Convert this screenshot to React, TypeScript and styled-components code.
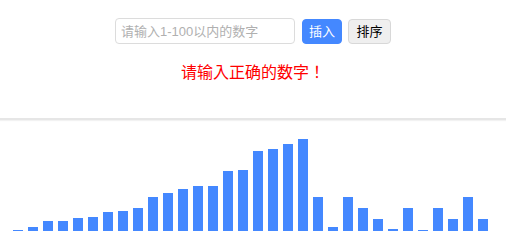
import React from "react";
import styled, { createGlobalStyle } from "styled-components";

const Global = createGlobalStyle`
  html, body { margin: 0; padding: 0; background: #fff; }
  body { font-family: "Liberation Sans", "Noto Sans CJK SC", sans-serif; }
`;

const Header = styled.header`
  height: 120px;
  box-sizing: border-box;
  padding-top: 18px;
  border-bottom: 2px solid #e6e6e6;
  box-shadow: 0 1px 1px #f2f2f2;
  display: flex;
  flex-direction: column;
  align-items: center;
`;

const Controls = styled.div`
  display: flex;
  align-items: center;
  gap: 6px;
`;

const Input = styled.input`
  box-sizing: border-box;
  width: 180px;
  height: 26px;
  margin-right: 1px;
  padding: 0 5px;
  border: 1px solid #dcdcdc;
  border-radius: 4px;
  outline: none;
  font-family: "Liberation Sans", "Noto Sans CJK SC", sans-serif;
  font-size: 13px;
  color: #333;
  &::placeholder { color: #b0b0b0; }
`;

const Button = styled.button<{ $primary?: boolean }>`
  box-sizing: border-box;
  width: ${(p) => (p.$primary ? "40px" : "43px")};
  height: 25px;
  padding: 0;
  border: 1px solid ${(p) => (p.$primary ? "#4488ff" : "#d8d8d8")};
  border-radius: 4px;
  background: ${(p) => (p.$primary ? "#4488ff" : "#efefef")};
  color: ${(p) => (p.$primary ? "#fff" : "#000")};
  font-family: "Liberation Sans", "Noto Sans CJK SC", sans-serif;
  font-size: 13px;
  line-height: 23px;
  text-align: center;
`;

const Message = styled.p`
  margin: 16px 0 0;
  color: #ff0000;
  font-family: "Noto Sans CJK JP", "Noto Sans CJK SC", sans-serif;
  font-size: 16px;
  line-height: 22px;
`;

const Chart = styled.ul`
  list-style: none;
  margin: 0;
  padding: 0 0 0 13px;
  height: 111px;
  display: flex;
  align-items: flex-end;
  gap: 5px;
`;

const Bar = styled.li`
  width: 10px;
  background: #4488ff;
`;

const heights = [1, 4, 10, 10, 13, 14, 19, 20, 23, 34, 38, 42, 45, 45, 60, 61, 80, 82, 87, 92, 34, 4, 34, 23, 12, 2, 23, 1, 23, 12, 34, 12];

export default function App() {
  return (
    <>
      <Global />
      <Header>
        <Controls>
          <Input placeholder="请输入1-100以内的数字" />
          <Button $primary>插入</Button>
          <Button>排序</Button>
        </Controls>
        <Message>请输入正确的数字！</Message>
      </Header>
      <Chart>
        {heights.map((h, i) => (
          <Bar key={i} style={{ height: h }} />
        ))}
      </Chart>
    </>
  );
}
